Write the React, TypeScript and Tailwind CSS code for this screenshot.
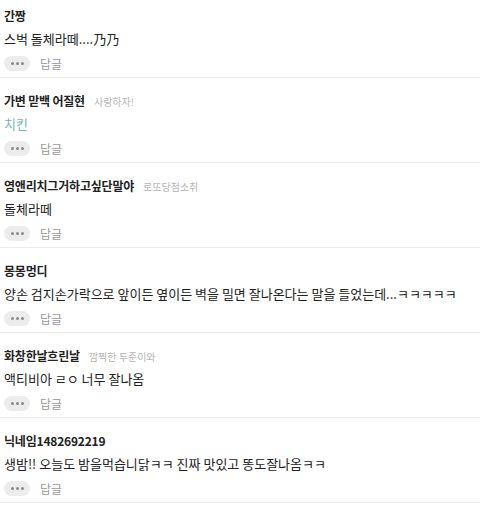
import React from "react";

type Comment = {
  name: string;
  tag?: string;
  text: string;
  highlight?: boolean;
};

const comments: Comment[] = [
  { name: "간짱", text: "스벅 돌체라떼....乃乃" },
  { name: "가변 맏백 어질현", tag: "사랑하자!", text: "치킨", highlight: true },
  { name: "영앤리치그거하고싶단말야", tag: "로또당첨소취", text: "돌체라떼" },
  {
    name: "몽몽멍디",
    text: "양손 검지손가락으로 앞이든 옆이든 벽을 밀면 잘나온다는 말을 들었는데...ㅋㅋㅋㅋㅋ",
  },
  { name: "화창한날흐린날", tag: "깜찍한 두준이와", text: "액티비아 ㄹㅇ 너무 잘나옴" },
  { name: "닉네임1482692219", text: "생밤!! 오늘도 밤을먹습니닭ㅋㅋ 진짜 맛있고 똥도잘나옴ㅋㅋ" },
];

const CommentRow = ({ c }: { c: Comment }) => {
  return (
    <div className="border-b border-[#ececec] pl-[4px] pt-[15px] pb-[6px]">
      {/* name + nickname tag */}
      <div className="flex items-center h-[16px]">
        <span className="text-[12px] font-bold text-[#222] tracking-[-0.2px]">{c.name}</span>
        {c.tag && (
          <span className="ml-[9px] text-[10px] text-[#b5b5b5]">{c.tag}</span>
        )}
      </div>

      <p
        className={`mt-[5px] h-[20px] leading-[20px] text-[13px] whitespace-nowrap ${
          c.highlight ? "text-[#79b3b3]" : "text-[#222]"
        }`}
      >
        {c.text}
      </p>

      <div className="mt-[7px] flex items-center h-[15px]">
        <button
          type="button"
          className="w-[26px] h-[15px] rounded-full bg-[#ececec] flex items-center justify-center gap-[2px]"
        >
          <span className="w-[3px] h-[3px] rounded-full bg-[#8a8a8a]" />
          <span className="w-[3px] h-[3px] rounded-full bg-[#8a8a8a]" />
          <span className="w-[3px] h-[3px] rounded-full bg-[#8a8a8a]" />
        </button>
        <span className="ml-[10px] text-[12px] text-[#9a9a9a]">답글</span>
      </div>
    </div>
  );
};

export default function App() {
  return (
    <div
      className="w-[480px] h-[505px] overflow-hidden bg-white"
      style={{ fontFamily: '"Noto Sans CJK KR", "Noto Sans", sans-serif' }}
    >
      <div className="mt-[-7px]">
        {comments.map((c, i) => (
          <CommentRow key={i} c={c} />
        ))}
      </div>
    </div>
  );
}
